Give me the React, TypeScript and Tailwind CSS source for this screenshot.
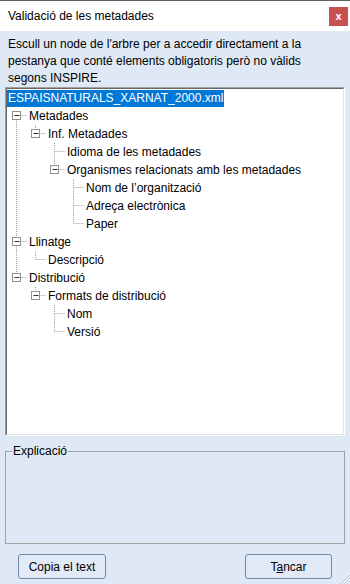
import React from "react";

type Node = { label: string; children?: Node[] };

const tree: Node[] = [
  {
    label: "Metadades",
    children: [
      {
        label: "Inf. Metadades",
        children: [
          { label: "Idioma de les metadades" },
          {
            label: "Organismes relacionats amb les metadades",
            children: [
              { label: "Nom de l\u2019organització" },
              { label: "Adreça electrònica" },
              { label: "Paper" },
            ],
          },
        ],
      },
    ],
  },
  { label: "Llinatge", children: [{ label: "Descripció" }] },
  {
    label: "Distribució",
    children: [
      {
        label: "Formats de distribució",
        children: [{ label: "Nom" }, { label: "Versió" }],
      },
    ],
  },
];

type Row = {
  label: string;
  level: number;
  last: boolean;
  first: boolean;
  open: boolean;
  rails: boolean[]; // ancestors (levels 1..level-1) that continue below
};

function flatten(nodes: Node[], level: number, rails: boolean[], out: Row[]) {
  nodes.forEach((n, i) => {
    const last = i === nodes.length - 1;
    out.push({
      label: n.label,
      level,
      last,
      first: i === 0,
      open: !!n.children,
      rails,
    });
    if (n.children) flatten(n.children, level + 1, [...rails, !last], out);
  });
  return out;
}

const rows = flatten(tree, 1, [], []);

const COL = 19;
const ROW = 18;

function Connector({ row }: { row: Row }) {
  const w = COL * row.level + 3;
  const cx = (k: number) => 9 + COL * (k - 1) + 0.5;
  const cy = 8.5;
  const x = cx(row.level);
  const stroke = "#a0a0a0";
  return (
    <svg width={w} height={ROW} className="shrink-0">
      {row.rails.map((on, i) =>
        on ? (
          <line
            key={i}
            x1={cx(i + 1)}
            y1={0}
            x2={cx(i + 1)}
            y2={ROW}
            stroke={stroke}
            strokeDasharray="1 1"
          />
        ) : null
      )}
      {!(row.level === 1 && row.first) && (
        <line x1={x} y1={0} x2={x} y2={cy} stroke={stroke} strokeDasharray="1 1" />
      )}
      {!row.last && (
        <line x1={x} y1={cy} x2={x} y2={ROW} stroke={stroke} strokeDasharray="1 1" />
      )}
      <line
        x1={x}
        y1={cy}
        x2={w - 2}
        y2={cy}
        stroke={stroke}
        strokeDasharray="1 1"
      />
      {row.open && (
        <g>
          <rect x={x - 4} y={cy - 4} width={8} height={8} fill="#fff" stroke="#919191" />
          <line x1={x - 2} y1={cy} x2={x + 3} y2={cy} stroke="#333" />
        </g>
      )}
    </svg>
  );
}

export default function App() {
  const font = { fontFamily: '"Liberation Sans", Arial, sans-serif' };
  return (
    <div
      className="relative flex h-[584px] w-[350px] flex-col overflow-hidden border-t border-[#5f5f5f] bg-[#dfe9f5] text-[12px] text-black"
      style={font}
    >
      {/* title bar */}
      <div className="flex h-[30px] items-center justify-between bg-white pl-[8px] pr-[2px]">
        <span className="leading-[16px]">Validació de les metadades</span>
        <div className="flex h-[19px] w-[19px] items-center justify-center bg-[#c75050] text-[11px] font-bold leading-none text-white">
          x
        </div>
      </div>

      <p className="px-[8px] pt-[5px] leading-[17px]">
        Escull un node de l'arbre per a accedir directament a la pestanya que
        conté elements obligatoris però no vàlids segons INSPIRE.
      </p>

      {/* tree */}
      <div className="mx-[5px] h-[349px] border border-b-white border-l-[#a0a0a0] border-r-white border-t-[#a0a0a0]">
        <div className="h-full border border-b-[#e3e3e3] border-l-[#696969] border-r-[#e3e3e3] border-t-[#696969] bg-white">
          <div className="flex h-[18px] items-center">
            <span className="bg-[#0078d7] px-[1px] leading-[17px] text-white">
              ESPAISNATURALS_XARNAT_2000.xml
            </span>
          </div>
          {rows.map((r, i) => (
            <div key={i} className="flex h-[18px] items-center">
              <Connector row={r} />
              <span className="whitespace-nowrap leading-[16px]">{r.label}</span>
            </div>
          ))}
        </div>
      </div>

      {/* group box */}
      <fieldset className="mx-[5px] mt-[8px] h-[100px] border border-[#a0a0a0] px-0">
        <legend className="ml-[6px] px-[1px] leading-[14px]">Explicació</legend>
      </fieldset>

      {/* buttons */}
      <div className="mt-[10px] flex justify-between pl-[18px] pr-[18px]">
        <button className="h-[25px] w-[88px] rounded-[3px] border border-[#7088a6] bg-[#e1eaf6] text-[12px] leading-none">
          Copia el text
        </button>
        <button className="h-[25px] w-[87px] rounded-[3px] border border-[#7088a6] bg-[#e1eaf6] text-[12px] leading-none">
          T<span className="underline">a</span>ncar
        </button>
      </div>

      {/* size grip */}
      <svg width="12" height="12" className="absolute bottom-0 right-0">
        {[3, 6, 9].map((d) => (
          <g key={d}>
            <line x1={12 - d} y1={12} x2={12} y2={12 - d} stroke="#b8c2cf" />
            <line x1={13 - d} y1={12} x2={12} y2={13 - d} stroke="#ffffff" />
          </g>
        ))}
      </svg>
    </div>
  );
}
